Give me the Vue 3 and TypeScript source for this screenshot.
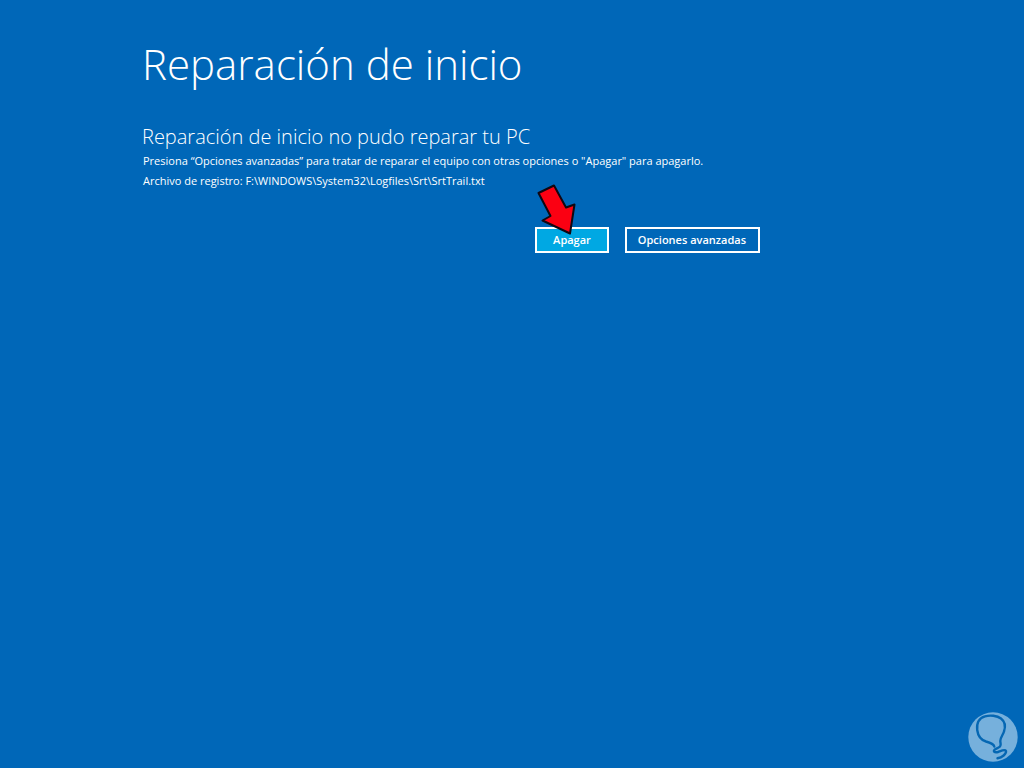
<script setup lang="ts">
const title: string = 'Reparación de inicio'
const subtitle: string = 'Reparación de inicio no pudo reparar tu PC'
const logPath: string = 'F:\\WINDOWS\\System32\\Logfiles\\Srt\\SrtTrail.txt'
</script>

<template>
  <main class="screen">
    <h1 class="title">{{ title }}</h1>
    <h2 class="subtitle">{{ subtitle }}</h2>
    <p class="text">Presiona “Opciones avanzadas” para tratar de reparar el equipo con otras opciones o "Apagar" para apagarlo.</p>
    <p class="text">Archivo de registro: {{ logPath }}</p>
    <div class="actions">
      <div class="pointed">
        <button class="btn primary" type="button">Apagar</button>
        <svg class="arrow" width="44" height="56" viewBox="535 182 44 56" aria-hidden="true">
          <path d="M538.5 193 L554 185.500 L566 207.500 L574.500 204.500 L570 233.500 L542.500 220.500 L550.500 216 Z" fill="#fb0012" stroke="#100812" stroke-width="2" stroke-linejoin="round" />
        </svg>
      </div>
      <button class="btn" type="button">Opciones avanzadas</button>
    </div>
    <svg class="badge" width="50" height="50" viewBox="968 712 50 50" aria-hidden="true">
      <circle cx="993" cy="737" r="24.7" fill="#76b0dc" />
      <path d="M994.3 746.500 C993.500 743.500 990 742.500 986 741.500 C981 740 978 736 977.200 730 C976.500 723 979 718 985 716.300 C990 715 997 715.500 1001 718.500 C1005.500 722 1005.500 727 1004 731.500 C1003 735 1000.500 737 1000.300 741 C1000.300 743.500 1001.500 744.500 1000 746.500 C998 748.500 995 748.500 994 750.500 C993.500 752.500 996 752.500 998 752 C1001 751 1005 749 1006 751 C1006.500 754 1002 757.500 997.500 758.300" fill="none" stroke="#0567b3" stroke-width="2.4" stroke-linecap="round" stroke-linejoin="round" />
    </svg>
  </main>
</template>

<style>
body {
  margin: 0;
  background: #0067b8;
}
</style>

<style scoped>
.screen {
  box-sizing: border-box;
  min-height: 100vh;
  padding: 33px 264px 0 142px;
  background: #0067b8;
  color: #fff;
  font-family: "Open Sans", "Noto Sans", sans-serif;
}
.title {
  margin: 0;
  font-size: 42px;
  font-weight: 300;
  line-height: 62px;
  white-space: nowrap;
}
.subtitle {
  margin: 28px 0 0;
  font-size: 20px;
  font-weight: 300;
  line-height: 28px;
  white-space: nowrap;
}
.text {
  margin: 0;
  padding-left: 1px;
  font-size: 11px;
  font-weight: 400;
  line-height: 20px;
  white-space: nowrap;
}
.actions {
  display: flex;
  justify-content: flex-end;
  gap: 16px;
  margin-top: 36px;
}
.pointed {
  position: relative;
}
.btn {
  box-sizing: border-box;
  height: 26px;
  padding: 0 12px 0 11px;
  border: 2px solid #fff;
  background: #0067b8;
  color: #fff;
  font-family: inherit;
  font-size: 11px;
  font-weight: 600;
  line-height: 22px;
  white-space: nowrap;
}
.primary {
  padding: 0 16px;
  background: #00a8e3;
}
.arrow {
  position: absolute;
  left: 0;
  top: -45px;
  pointer-events: none;
}
.badge {
  position: fixed;
  right: 6px;
  bottom: 6px;
}
</style>
